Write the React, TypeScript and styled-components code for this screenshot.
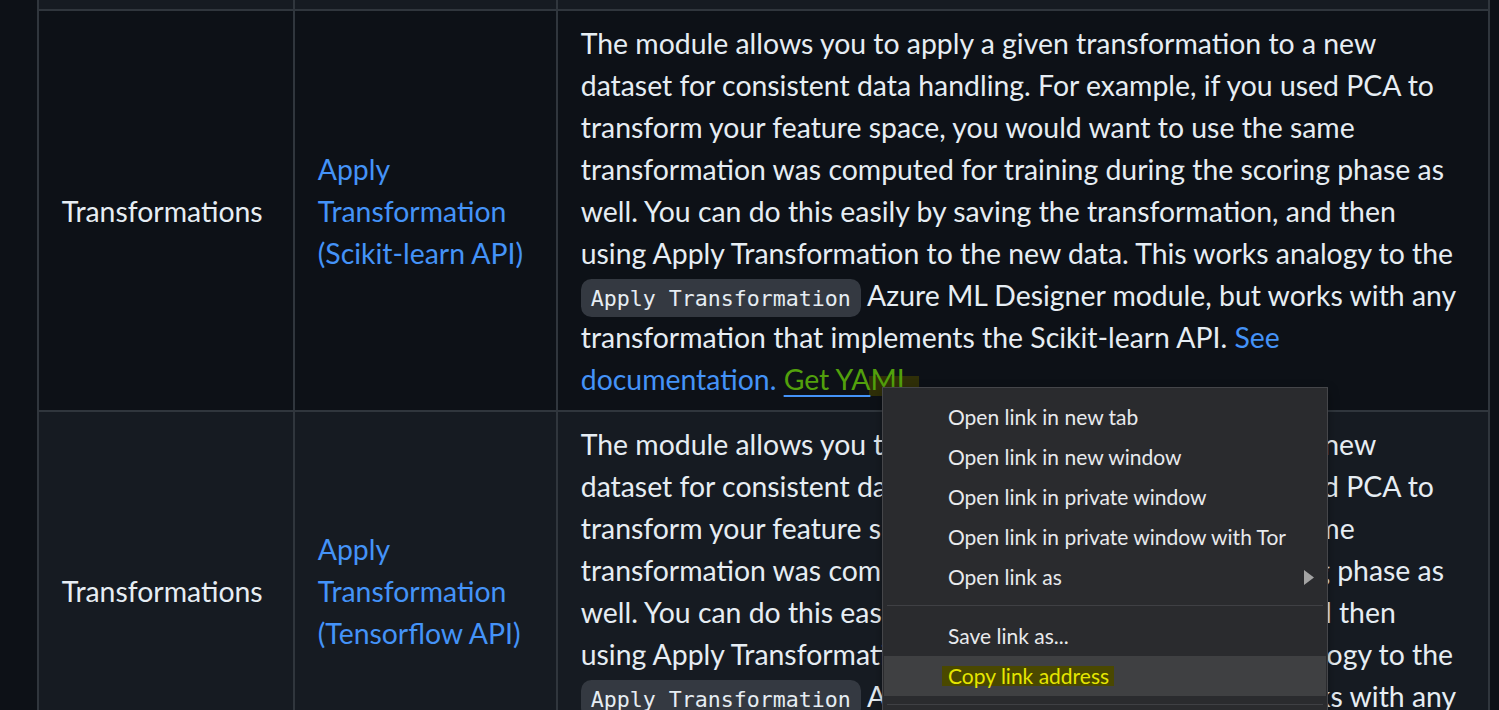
import React from 'react';
import styled, { createGlobalStyle } from 'styled-components';

const Global = createGlobalStyle`
  html, body { margin: 0; padding: 0; background: #0d1117; }
  body { overflow: hidden; }
`;

const Page = styled.div`
  position: relative;
  width: 1499px;
  height: 710px;
  overflow: hidden;
  box-sizing: border-box;
  padding-left: 37px;
  background: #0d1117;
  font-family: Lato, "Open Sans", sans-serif;
  font-size: 28.4px;
  line-height: 42px;
  color: #e6edf3;
`;

const Table = styled.div`
  display: flex;
  flex-direction: column;
  width: 1453px;
`;

const Row = styled.div<{ $striped?: boolean; $stub?: boolean }>`
  display: grid;
  grid-template-columns: 256px 263px 934px;
  height: ${p => (p.$stub ? '9px' : 'auto')};
  background: ${p => (p.$striped ? '#161b22' : '#0d1117')};
`;

const Cell = styled.div<{ $last?: boolean; $stub?: boolean }>`
  display: flex;
  align-items: center;
  box-sizing: border-box;
  border-left: 2px solid #30363d;
  border-top: ${p => (p.$stub ? 'none' : '2px solid #30363d')};
  border-right: ${p => (p.$last ? '2px solid #30363d' : 'none')};
  padding: ${p => (p.$stub ? '0' : '10.5px 22.75px')};
`;

const Lines = styled.div`
  white-space: nowrap;
`;

const Link = styled.a`
  color: #4493f8;
  text-decoration: none;
`;

const Code = styled.code`
  font-family: "DejaVu Sans Mono", "Liberation Mono", monospace;
  font-size: 21.6px;
  line-height: 1;
  padding: 7px 10px 6px;
  border-radius: 10.5px;
  background: #343941;
  color: #e6edf3;
`;

const YamlLink = styled.a`
  position: relative;
  z-index: 0;
  color: #52a00c;
  text-decoration: none;
`;

const Underlined = styled.span`
  text-decoration: underline;
  text-decoration-color: #4493f8;
  text-decoration-thickness: 2px;
  text-underline-offset: 5px;
`;

const Highlighted = styled.span`
  position: relative;
  &::before {
    content: '';
    position: absolute;
    z-index: -1;
    left: -1px;
    right: -8px;
    top: 14px;
    height: 20px;
    background: #2f2f08;
  }
`;

const Menu = styled.div`
  position: absolute;
  left: 882px;
  top: 387px;
  width: 446px;
  box-sizing: border-box;
  padding: 9px 0;
  background: #2a2b2e;
  border: 1px solid #45464a;
  box-shadow: 0 4px 10px rgba(0, 0, 0, 0.35);
  font-family: Lato, "Open Sans", sans-serif;
  font-size: 21px;
  color: #e8eaed;
`;

const Item = styled.div<{ $active?: boolean }>`
  position: relative;
  display: flex;
  align-items: center;
  height: 40px;
  margin: 0 1px;
  padding: 0 12px 0 64px;
  background: ${p => (p.$active ? '#3f4042' : 'transparent')};
`;

const Separator = styled.div`
  height: 1px;
  margin: 8px 4px 10px;
  background: #3f4044;
`;

const SubArrow = styled.svg`
  margin-left: auto;
  width: 10px;
  height: 15px;
`;

const Mark = styled.mark`
  background: #4a4800;
  color: #e6e600;
  margin-left: -6px;
  padding: 0 5px 0 6px;
  line-height: 20px;
`;

type DescProps = { api: string; full?: boolean };

const Description: React.FC<DescProps> = ({ api, full }) => (
  <Lines>
    The module allows you to apply a given transformation to a new<br />
    dataset for consistent data handling. For example, if you used PCA to<br />
    transform your feature space, you would want to use the same<br />
    transformation was computed for training during the scoring phase as<br />
    well. You can do this easily by saving the transformation, and then<br />
    using Apply Transformation to the new data. This works analogy to the<br />
    <Code>Apply Transformation</Code> Azure ML Designer module, but works with any<br />
    {full ? (
      <>
        transformation that implements the {api}. <Link href="#">See<br />documentation.</Link>{' '}
        <YamlLink href="#">
          <Underlined>Get YA</Underlined>
          <Highlighted>ML</Highlighted>
        </YamlLink>
      </>
    ) : (
      <>
        transformation that implements the {api}. <Link href="#">See documentation.</Link>{' '}
        <Link href="#">Get YAML</Link>
      </>
    )}
  </Lines>
);

const ModuleRow: React.FC<{ striped?: boolean; api: string; full?: boolean }> = ({ striped, api, full }) => (
  <Row $striped={striped}>
    <Cell>Transformations</Cell>
    <Cell>
      <Link href="#">
        Apply<br />Transformation<br />({api})
      </Link>
    </Cell>
    <Cell $last>
      <Description api={api} full={full} />
    </Cell>
  </Row>
);

export default function App() {
  return (
    <>
      <Global />
      <Page>
        <Table>
          <Row $striped $stub>
            <Cell $stub />
            <Cell $stub />
            <Cell $stub $last />
          </Row>
          <ModuleRow api="Scikit-learn API" full />
          <ModuleRow striped api="Tensorflow API" />
        </Table>
        <Menu>
          <Item>Open link in new tab</Item>
          <Item>Open link in new window</Item>
          <Item>Open link in private window</Item>
          <Item>Open link in private window with Tor</Item>
          <Item>
            Open link as
            <SubArrow viewBox="0 0 10 15">
              <polygon points="0,0 10,7.5 0,15" fill="#a3a3a3" />
            </SubArrow>
          </Item>
          <Separator />
          <Item>Save link as...</Item>
          <Item $active>
            <Mark>Copy link address</Mark>
          </Item>
          <Separator />
          <Item>Inspect</Item>
        </Menu>
      </Page>
    </>
  );
}
